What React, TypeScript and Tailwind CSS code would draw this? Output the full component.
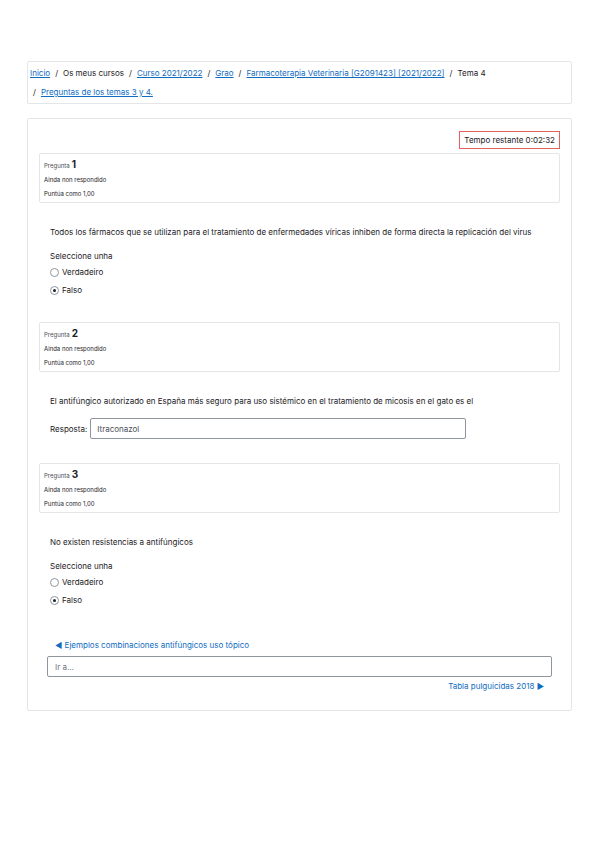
import React from "react";

const Radio = ({ checked }: { checked?: boolean }) => (
  <span className="inline-flex h-[9px] w-[9px] items-center justify-center rounded-full border border-[#8f959e] bg-white">
    {checked && <span className="h-[3px] w-[3px] rounded-full bg-[#1d2125]" />}
  </span>
);

const Info = ({ n }: { n: number }) => (
  <div className="mx-[11px] flex h-[50px] flex-col justify-center gap-[5px] rounded-[2px] border border-[#e3e5e8] bg-white px-[4px] pt-[1px] text-[6px] leading-[9px] text-[#1d2125]">
    <div className="flex items-baseline">
      <span className="text-[#4a4f55]">Pregunta</span>
      <span className="ml-[2px] text-[10px] font-bold leading-[9px]">{n}</span>
    </div>
    <div>Ainda non respondido</div>
    <div>Puntúa como 1,00</div>
  </div>
);

const TF = () => (
  <div className="text-[8px] leading-[10px] text-[#1d2125]">
    <div className="mt-[14px]">Seleccione unha</div>
    <div className="mt-[6px] flex items-center gap-[3px]">
      <Radio /> <span>Verdadeiro</span>
    </div>
    <div className="mt-[8px] flex items-center gap-[3px]">
      <Radio checked /> <span>Falso</span>
    </div>
  </div>
);

export default function App() {
  return (
    <div
      className="h-[848px] w-[599px] bg-white pt-[61px]"
      style={{ fontFamily: "Inter, 'Liberation Sans', sans-serif" }}
    >
      <div className="mx-[27px] flex h-[43px] flex-col justify-center gap-[9px] rounded-[2px] border border-[#e3e5e8] px-[2px] text-[8px] leading-[10px] text-[#1d2125]">
        <div className="flex items-center gap-[5px]">
          <a className="text-[#0f6cbf] underline">Inicio</a>
          <span>/</span>
          <span>Os meus cursos</span>
          <span>/</span>
          <a className="text-[#0f6cbf] underline">Curso 2021/2022</a>
          <span>/</span>
          <a className="text-[#0f6cbf] underline">Grao</a>
          <span>/</span>
          <a className="text-[#0f6cbf] underline">Farmacoterapia Veterinaria [G2091423] [2021/2022]</a>
          <span>/</span>
          <span>Tema 4</span>
        </div>
        <div className="flex items-center gap-[5px] pl-[3px]">
          <span>/</span>
          <a className="text-[#0f6cbf] underline">Preguntas de los temas 3 y 4.</a>
        </div>
      </div>

      <div className="mx-[27px] mt-[14px] h-[593px] rounded-[2px] border border-[#e3e5e8] pt-[12px]">
        <div className="flex justify-end pr-[11px]">
          <div className="flex h-[18px] items-center border border-[#e0605a] px-[4px] text-[8px] text-[#1d2125]">
            Tempo restante 0:02:32
          </div>
        </div>
        <div className="mt-[4px]">
          <Info n={1} />
        </div>
        <div className="pl-[22px] pt-[24px]">
          <div className="text-[8px] leading-[10px] text-[#1d2125]">
            Todos los fármacos que se utilizan para el tratamiento de enfermedades víricas inhiben de forma directa la replicación del virus
          </div>
          <TF />
        </div>

        <div className="mt-[27px]">
          <Info n={2} />
        </div>
        <div className="pl-[22px] pt-[24px] text-[8px] leading-[10px] text-[#1d2125]">
          <div>El antifúngico autorizado en España más seguro para uso sistémico en el tratamiento de micosis en el gato es el</div>
          <div className="mt-[12px] flex items-center gap-[3px]">
            <span>Resposta:</span>
            <div className="flex h-[21px] w-[376px] items-center rounded-[2px] border border-[#8f959e] px-[6px] text-[#495057]">
              Itraconazol
            </div>
          </div>
        </div>

        <div className="mt-[24px]">
          <Info n={3} />
        </div>
        <div className="pl-[22px] pt-[24px]">
          <div className="text-[8px] leading-[10px] text-[#1d2125]">No existen resistencias a antifúngicos</div>
          <TF />
        </div>

        <div className="mt-[35px] pl-[27px] text-[8px] leading-[10px] text-[#0f6cbf]">◀ Ejemplos combinaciones antifúngicos uso tópico</div>
        <div className="mx-[19px] mt-[6px] flex h-[21px] items-center rounded-[2px] border border-[#8f959e] px-[7px] text-[8px] text-[#6a737b]">
          Ir a...
        </div>
        <div className="mt-[4px] pr-[27px] text-right text-[8px] leading-[10px] text-[#0f6cbf]">Tabla pulguicidas 2018 ▶</div>
      </div>
    </div>
  );
}
